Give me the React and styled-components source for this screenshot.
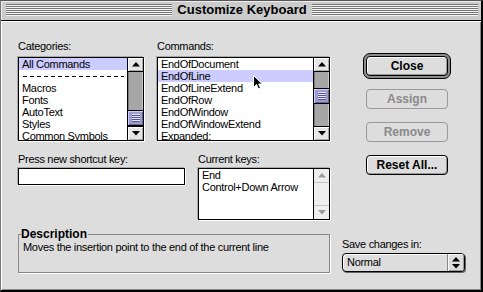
import React from 'react';
import styled, { createGlobalStyle } from 'styled-components';

const GlobalStyle = createGlobalStyle`
  html, body { margin: 0; padding: 0; background: #fff; }
  body { font-family: "Liberation Sans", Arial, sans-serif; color: #000; }
  * { box-sizing: border-box; }
`;

const Window = styled.div`
  position: relative;
  width: 483px;
  height: 292px;
  display: flex;
  flex-direction: column;
  background: #dddddd;
  border-top: 1px solid #555;
  border-left: 1px solid #777;
  border-right: 2px solid #000;
  border-bottom: 2px solid #000;
`;

const TitleBar = styled.div`
  height: 20px;
  flex: none;
  display: flex;
  align-items: flex-start;
  gap: 5px;
  padding: 3px 3px 0 5px;
  background: #cccccc;
  border-bottom: 1px solid #000;
  box-shadow: inset 1px 1px #eee;
`;

const Stripes = styled.div`
  flex: 1;
  height: 12px;
  background: repeating-linear-gradient(to bottom, #777 0 1px, #f4f4f4 1px 2px);
`;

const Title = styled.div`
  font-size: 13px;
  font-weight: bold;
  line-height: 14px;
  margin-top: -1px;
  white-space: nowrap;
`;

const Content = styled.div`
  flex: 1;
  display: flex;
  flex-direction: column;
  padding: 19px 0 0 17px;
  box-shadow: inset 1px 1px #fff, inset -1px -1px #888;
`;

const Upper = styled.div`
  display: flex;
  align-items: flex-start;
`;

const LeftCol = styled.div`
  width: 312px;
  display: flex;
  flex-direction: column;
  gap: 12px;
`;

const FieldRow = styled.div`
  display: flex;
  gap: 13px;
`;

const Field = styled.div`
  width: ${p => p.$w}px;
  display: flex;
  flex-direction: column;
  gap: ${p => p.$gap ?? 4}px;
`;

const Label = styled.div`
  font-size: 11px;
  letter-spacing: -0.3px;
  line-height: 13px;
  white-space: nowrap;
`;

const ListBox = styled.div`
  display: flex;
  height: ${p => p.$h}px;
  background: #fff;
  border: 1px solid #000;
  box-shadow: -1px -1px 0 #aaa, 1px 1px 0 #fff;
`;

const ListBody = styled.div`
  flex: 1;
  overflow: hidden;
`;

const Item = styled.div`
  height: 12px;
  line-height: 12px;
  padding-left: 3px;
  font-size: 11px;
  letter-spacing: -0.3px;
  white-space: nowrap;
  background: ${p => (p.$selected ? '#ccccff' : 'transparent')};
`;

const Separator = styled.div`
  height: 12px;
  display: flex;
  align-items: center;
  padding: 0 3px 0 4px;
  &::after {
    content: '';
    flex: 1;
    height: 1px;
    background: repeating-linear-gradient(90deg, #000 0 4px, transparent 4px 7px);
  }
`;

const Scroll = styled.div`
  width: 16px;
  flex: none;
  display: flex;
  flex-direction: column;
  border-left: 1px solid #000;
  background: ${p => (p.$disabled ? '#eeeeee' : '#a6a6a6')};
`;

const Arrow = styled.div`
  height: 14px;
  flex: none;
  display: flex;
  align-items: center;
  justify-content: center;
  background: #e6e6e6;
  ${p => (p.$down ? 'border-top' : 'border-bottom')}: 1px solid ${p => (p.$disabled ? '#c4c4c4' : '#000')};
  box-shadow: ${p => (p.$disabled ? 'none' : 'inset 1px 1px #fff, inset -1px -1px #aaa')};
  background: ${p => (p.$disabled ? '#eeeeee' : '#e6e6e6')};
`;

const Track = styled.div`
  flex: 1;
  display: flex;
  flex-direction: column;
  padding-top: ${p => p.$offset}px;
  box-shadow: ${p => (p.$disabled ? 'none' : 'inset 1px 0 #7a7a7a, inset -1px 0 #c8c8c8')};
`;

const Thumb = styled.div`
  height: 16px;
  display: flex;
  align-items: center;
  justify-content: center;
  background: #9c9cce;
  border-top: 1px solid #000;
  border-bottom: 1px solid #000;
  box-shadow: inset 1px 1px #ccccff, inset -1px -1px #666699;
`;

const Grip = styled.div`
  width: 8px;
  height: 8px;
  background: repeating-linear-gradient(to bottom, #e6e6ff 0 1px, #55558a 1px 2px);
`;

const Tri = ({ down, color }) => (
  <svg width="8" height="5" viewBox="0 0 8 5">
    <polygon points={down ? '0,0 8,0 4,4.5' : '0,4.5 8,4.5 4,0'} fill={color} />
  </svg>
);

const ScrollBar = ({ offset = 0, disabled }) => (
  <Scroll $disabled={disabled}>
    <Arrow $disabled={disabled}><Tri color={disabled ? '#9a9a9a' : '#000'} /></Arrow>
    <Track $offset={offset} $disabled={disabled}>
      {!disabled && <Thumb><Grip /></Thumb>}
    </Track>
    <Arrow $down $disabled={disabled}><Tri down color={disabled ? '#9a9a9a' : '#000'} /></Arrow>
  </Scroll>
);

const Input = styled.div`
  height: 17px;
  background: #fff;
  border: 1px solid #000;
  box-shadow: -1px -1px 0 #aaa, 1px 1px 0 #fff;
`;

const RightCol = styled.div`
  display: flex;
  flex-direction: column;
  gap: 13px;
  margin-left: 36px;
  padding-top: 16px;
`;

const Ring = styled.div`
  display: flex;
  margin: -3px;
  padding: 2px;
  border: 1px solid #000;
  border-radius: 7px;
  background: #8c8c8c;
`;

const Button = styled.button`
  width: 82px;
  height: 20px;
  padding: 0;
  border: 1px solid ${p => (p.disabled ? '#999' : '#000')};
  border-radius: 4px;
  background: #dddddd;
  box-shadow: ${p => (p.disabled ? 'none' : 'inset 1px 1px #fff, inset -1px -1px #999')};
  font-family: "Liberation Sans", Arial, sans-serif;
  font-size: 12px;
  font-weight: bold;
  line-height: 16px;
  color: ${p => (p.disabled ? '#8a8a8a' : '#000')};
`;

const Lower = styled.div`
  display: flex;
  align-items: flex-start;
  margin-top: 8px;
  gap: 12px;
`;

const Group = styled.fieldset`
  width: 312px;
  height: 45px;
  margin: 0;
  padding: 0 0 0 4px;
  border: 1px solid #888;
  box-shadow: 1px 1px 0 #fff;
`;

const Legend = styled.legend`
  margin-left: -2px;
  padding: 0 1px 0 0;
  font-size: 12px;
  font-weight: bold;
  line-height: 12px;
`;

const Description = styled(Label)`
  margin-top: 1px;
`;

const SaveCol = styled.div`
  display: flex;
  flex-direction: column;
  gap: 2px;
  padding-top: 10px;
`;

const Popup = styled.div`
  display: flex;
  width: 123px;
  height: 19px;
  border: 1px solid #000;
  border-radius: 4px;
  background: #dddddd;
  box-shadow: inset 1px 1px #fff, 1px 1px 0 #666;
  overflow: hidden;
`;

const PopupText = styled.span`
  flex: 1;
  padding-left: 4px;
  font-size: 11px;
  letter-spacing: -0.3px;
  line-height: 17px;
`;

const PopupArrows = styled.span`
  width: 17px;
  display: flex;
  flex-direction: column;
  align-items: center;
  justify-content: center;
  gap: 2px;
  border-left: 1px solid #888;
  box-shadow: inset 1px 1px #fff, inset -1px -1px #999;
`;

const Cursor = styled.svg`
  position: absolute;
  left: 252px;
  top: 74px;
`;

const categories = ['All Commands', null, 'Macros', 'Fonts', 'AutoText', 'Styles', 'Common Symbols'];
const commands = ['EndOfDocument', 'EndOfLine', 'EndOfLineExtend', 'EndOfRow', 'EndOfWindow', 'EndOfWindowExtend', 'Expanded:'];

const App = () => (
  <>
    <GlobalStyle />
    <Window>
      <TitleBar>
        <Stripes />
        <Title>Customize Keyboard</Title>
        <Stripes />
      </TitleBar>
      <Content>
        <Upper>
          <LeftCol>
            <FieldRow>
              <Field $w={126}>
                <Label>Categories:</Label>
                <ListBox $h={84}>
                  <ListBody>
                    {categories.map((c, i) =>
                      c ? <Item key={i} $selected={i === 0}>{c}</Item> : <Separator key={i} />
                    )}
                  </ListBody>
                  <ScrollBar offset={38} />
                </ListBox>
              </Field>
              <Field $w={173}>
                <Label>Commands:</Label>
                <ListBox $h={84}>
                  <ListBody>
                    {commands.map((c, i) => (
                      <Item key={c} $selected={i === 1}>{c}</Item>
                    ))}
                  </ListBody>
                  <ScrollBar offset={16} />
                </ListBox>
              </Field>
            </FieldRow>
            <FieldRow>
              <Field $w={167} $gap={2}>
                <Label>Press new shortcut key:</Label>
                <Input />
              </Field>
              <Field $w={132} $gap={2}>
                <Label>Current keys:</Label>
                <ListBox $h={52}>
                  <ListBody>
                    <Item>End</Item>
                    <Item>Control+Down Arrow</Item>
                  </ListBody>
                  <ScrollBar disabled />
                </ListBox>
              </Field>
            </FieldRow>
          </LeftCol>
          <RightCol>
            <Ring><Button>Close</Button></Ring>
            <Button disabled>Assign</Button>
            <Button disabled>Remove</Button>
            <Button>Reset All...</Button>
          </RightCol>
        </Upper>
        <Lower>
          <Group>
            <Legend>Description</Legend>
            <Description>Moves the insertion point to the end of the current line</Description>
          </Group>
          <SaveCol>
            <Label>Save changes in:</Label>
            <Popup>
              <PopupText>Normal</PopupText>
              <PopupArrows>
                <Tri color="#000" />
                <Tri down color="#000" />
              </PopupArrows>
            </Popup>
          </SaveCol>
        </Lower>
      </Content>
      <Cursor width="11" height="16" viewBox="0 0 11 16">
        <polygon
          points="0.5,0.5 0.5,12.5 3.5,9.5 5.5,14 7.5,13 5.7,9 9.5,9"
          fill="#000"
          stroke="#fff"
          strokeWidth="1"
        />
      </Cursor>
    </Window>
  </>
);

export default App;
